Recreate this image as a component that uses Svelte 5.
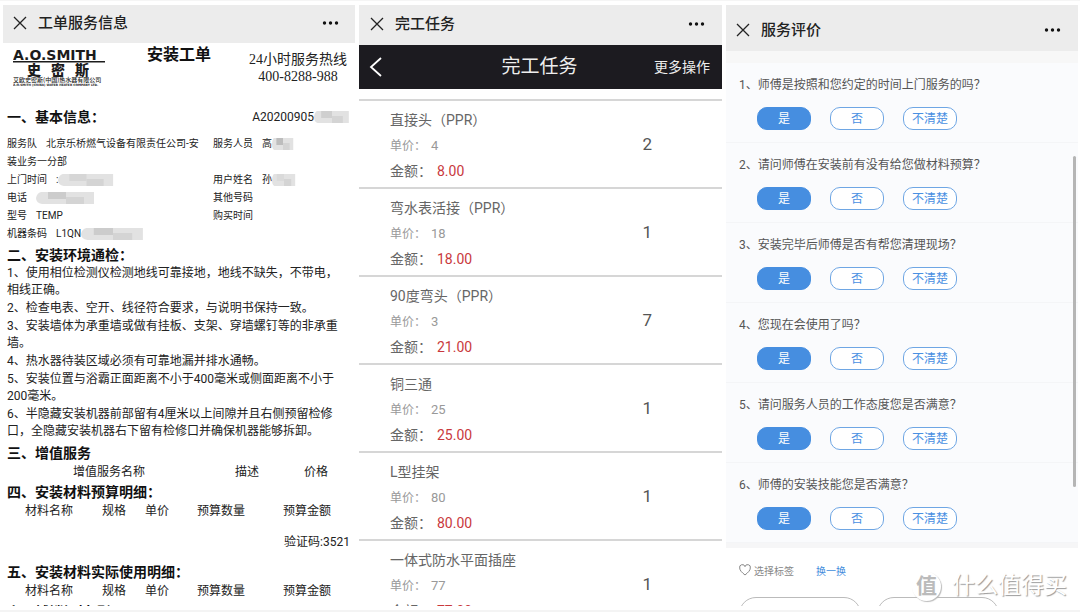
<script>
  const checks = [
    ['1、使用相位检测仪检测地线可靠接地，地线不缺失，不带电，', '相线正确。'],
    ['2、检查电表、空开、线径符合要求，与说明书保持一致。'],
    ['3、安装墙体为承重墙或做有挂板、支架、穿墙螺钉等的非承重', '墙。'],
    ['4、热水器待装区域必须有可靠地漏并排水通畅。'],
    ['5、安装位置与浴霸正面距离不小于400毫米或侧面距离不小于', '200毫米。'],
    ['6、半隐藏安装机器前部留有4厘米以上间隙并且右侧预留检修', '口，全隐藏安装机器右下留有检修口并确保机器能够拆卸。']
  ];
  const items = [
    { name: '直接头（PPR）', price: '4', total: '8.00', count: 2 },
    { name: '弯水表活接（PPR）', price: '18', total: '18.00', count: 1 },
    { name: '90度弯头（PPR）', price: '3', total: '21.00', count: 7 },
    { name: '铜三通', price: '25', total: '25.00', count: 1 },
    { name: 'L型挂架', price: '80', total: '80.00', count: 1 },
    { name: '一体式防水平面插座', price: '77', total: '77.00', count: 1 }
  ];
  const questions = [
    '师傅是按照和您约定的时间上门服务的吗？',
    '请问师傅在安装前有没有给您做材料预算？',
    '安装完毕后师傅是否有帮您清理现场？',
    '您现在会使用了吗？',
    '请问服务人员的工作态度您是否满意？',
    '师傅的安装技能您是否满意？'
  ];
  const options = ['是', '否', '不清楚'];
  const materialHeads = ['材料名称', '规格', '单价', '预算数量', '预算金额'];
  let answers = $state(questions.map(() => '是'));
</script>

{#snippet bar(title)}
  <header class="bar">
    <button class="icon" aria-label="关闭">
      <svg width="14" height="14" viewBox="0 0 14 14"><path d="M1 1l12 12M13 1L1 13" stroke="#222" stroke-width="1.3" fill="none" /></svg>
    </button>
    <h1>{title}</h1>
    <button class="icon" aria-label="更多">
      <svg width="18" height="6" viewBox="0 0 18 6"><circle cx="2.500" cy="3" r="1.7" fill="#111" /><circle cx="8.500" cy="3" r="1.7" fill="#111" /><circle cx="14.500" cy="3" r="1.7" fill="#111" /></svg>
    </button>
  </header>
{/snippet}

{#snippet mask(w, tone)}
  <svg class="mask" width={w} height="14" viewBox="0 0 60 14" preserveAspectRatio="none">
    <path d="M5 1H58V13H6Q0 12 0 7Q1 2 5 1Z" fill="#e2e2e2" />
    <path d="M12 1H30V8H12Z" fill={tone} />
    <path d="M30 6H48V13H30Z" fill="#d4d4d4" />
  </svg>
{/snippet}

{#snippet materials()}
  <table class="materials">
    <thead><tr>{#each materialHeads as h}<th>{h}</th>{/each}</tr></thead>
  </table>
{/snippet}

<main>
  <section class="panel order">
    {@render bar('工单服务信息')}
    <div class="sheet">
      <div class="top">
        <div class="logo">
          <svg width="96" height="38" viewBox="0 0 96 38" role="img" aria-label="A.O.SMITH 史密斯">
            <g fill="#1c1c1c" font-family="'DejaVu Sans', sans-serif" font-weight="700">
              <text x="0" y="11" font-size="14">A.O.SMITH</text>
              <rect x="0" y="12" width="92" height="1.5" />
              <g font-family="'Noto Sans CJK SC', sans-serif" font-weight="900">
                <text x="14" y="26" font-size="14">史</text>
                <text x="38" y="26" font-size="14">密</text>
                <text x="62" y="26" font-size="14">斯</text>
                <text x="0" y="33" font-size="6" font-weight="500">艾欧史密斯(中国)热水器有限公司</text>
              </g>
              <text x="0" y="37" font-size="3">A.O.SMITH (CHINA) WATER HEATER COMPANY LTD.</text>
            </g>
          </svg>
        </div>
        <h2>安装工单</h2>
        <p class="hotline">24小时服务热线<br />400-8288-988</p>
      </div>

      <div class="basic">
        <h3>一、基本信息：</h3>
        <span class="code">A20200905{@render mask(36, '#cfcfcf')}</span>
      </div>
      <dl class="info">
        <div><dt>服务队</dt><dd>北京乐桥燃气设备有限责任公司-安装业务一分部</dd></div>
        <div><dt>服务人员</dt><dd>高{@render mask(22, '#bdbdbd')}</dd></div>
        <div><dt>上门时间</dt><dd>:{@render mask(57, '#d6d6d6')}</dd></div>
        <div><dt>用户姓名</dt><dd>孙{@render mask(24, '#dadada')}</dd></div>
        <div><dt>电话</dt><dd>{@render mask(60, '#cccccc')}</dd></div>
        <div><dt>其他号码</dt><dd></dd></div>
        <div><dt>型号</dt><dd>TEMP</dd></div>
        <div><dt>购买时间</dt><dd></dd></div>
        <div><dt>机器条码</dt><dd>L1QN{@render mask(64, '#cccccc')}</dd></div>
      </dl>

      <h3>二、安装环境通检：</h3>
      <div class="checks">
        {#each checks as lines}
          <p>{#each lines as line}<span>{line}</span>{/each}</p>
        {/each}
      </div>

      <h3>三、增值服务</h3>
      <table class="extras">
        <thead><tr><th>增值服务名称</th><th>描述</th><th>价格</th></tr></thead>
      </table>
      <h3>四、安装材料预算明细：</h3>
      {@render materials()}
      <p class="verify">验证码:3521</p>
      <h3>五、安装材料实际使用明细：</h3>
      {@render materials()}
      <h3>六、辅销加材明细：</h3>
    </div>
  </section>

  <section class="panel task">
    {@render bar('完工任务')}
    <nav>
      <button class="icon" aria-label="返回">
        <svg width="14" height="20" viewBox="0 0 14 20"><path d="M12 1L2 10l10 9" stroke="#fff" stroke-width="1.8" fill="none" /></svg>
      </button>
      <h2>完工任务</h2>
      <button class="more">更多操作</button>
    </nav>
    <ul>
      {#each items as item}
        <li>
          <div class="detail">
            <p class="name">{item.name}</p>
            <p class="price">单价：<span>{item.price}</span></p>
            <p class="total">金额：<span>{item.total}</span></p>
          </div>
          <span class="count">{item.count}</span>
        </li>
      {/each}
    </ul>
  </section>

  <section class="panel review">
    {@render bar('服务评价')}
    <div class="questions">
      {#each questions as question, i}
        <div class="question">
          <p>{i + 1}、{question}</p>
          <div class="options">
            {#each options as option}
              <button class:chosen={answers[i] === option} aria-pressed={answers[i] === option} onclick={() => (answers[i] = option)}>{option}</button>
            {/each}
          </div>
        </div>
      {/each}
    </div>
    <div class="tags">
      <div class="tagline">
        <svg width="12" height="12" viewBox="0 0 12 12"><path d="M6 11C3 8.500.7 6.500.7 4A2.700 2.700 0 0 1 6 2.700 2.700 2.700 0 0 1 11.300 4C11.300 6.500 9 8.500 6 11Z" fill="none" stroke="#888" /></svg>
        <span>选择标签</span>
        <button>换一换</button>
      </div>
      <div class="chips"><span></span><span></span></div>
    </div>
    <i class="thumb"></i>
    <div class="watermark"><b>值</b><span>什么值得买</span></div>
  </section>
</main>

<style>
  :global(body) { margin: 0; background: #fff; }
  main {
    box-sizing: border-box;
    height: 100vh;
    display: grid;
    grid-template-columns: 352fr 363fr 352fr;
    grid-template-rows: minmax(0, 1fr);
    gap: 4px;
    padding: 4px 2px 4px 3px;
    border-top: 1px solid #f5f5f5;
    border-bottom: 2px solid #f4f4f4;
    font-family: Roboto, 'Noto Sans CJK SC', sans-serif;
    color: #222;
  }
  h1, h2, h3, p, ul, dl, dd { margin: 0; padding: 0; }
  button { border: 0; padding: 0; background: none; font: inherit; color: inherit; cursor: pointer; }
  table { border-collapse: collapse; table-layout: fixed; width: 100%; }
  th { padding: 2px 0 0; font-weight: 400; line-height: 17px; text-align: left; white-space: nowrap; }

  .panel { position: relative; overflow: hidden; min-width: 0; background: #fff; }
  .icon { display: flex; align-items: center; }
  .bar { display: flex; align-items: center; height: 38px; box-sizing: border-box; padding: 0 15px 2px 10px; background: #ececec; }
  .bar h1 { flex: 1; margin-left: 11px; font-size: 15px; line-height: 20px; font-weight: 500; }

  .sheet { padding: 0 5px 0 4px; white-space: nowrap; font-size: 12px; line-height: 18px; }
  .top { display: flex; justify-content: space-between; height: 64px; }
  .logo { padding: 6px 0 0 6px; }
  .top h2 { font-size: 16px; line-height: 24px; font-weight: 700; color: #111; }
  .hotline { padding: 8px 3px 0 0; font-family: 'Liberation Serif', 'Noto Sans CJK SC', serif; font-size: 14px; line-height: 17px; text-align: center; }
  h3 { font-size: 14px; line-height: 18px; font-weight: 700; color: #111; }
  .basic { display: flex; justify-content: space-between; align-items: center; height: 20px; margin-bottom: 8px; }
  .code { display: flex; align-items: center; }
  .mask { flex: none; display: inline-block; vertical-align: middle; }
  .info { display: grid; grid-template-columns: 196px 1fr; column-gap: 10px; font-size: 10px; line-height: 18px; margin-bottom: 3px; }
  .info dt, .info dd { display: inline; }
  .info dt { margin-right: 9px; }
  .info div { white-space: normal; min-height: 18px; }
  .info div:nth-child(n + 2) { height: 18px; white-space: nowrap; }
  .checks { display: grid; gap: 1px; line-height: 17px; padding: 1px 0 4px; }
  .checks span { display: block; }
  .extras { margin-bottom: 2px; }
  .extras th:nth-child(1) { width: 228px; padding-left: 66px; box-sizing: border-box; }
  .extras th:nth-child(2) { width: 69px; }
  .materials th:nth-child(1) { width: 95px; padding-left: 18px; box-sizing: border-box; }
  .materials th:nth-child(2) { width: 43px; }
  .materials th:nth-child(3) { width: 52px; }
  .materials th:nth-child(4) { width: 86px; }
  .verify { text-align: right; padding: 13px 0 12px; }
  .materials + h3 { margin-top: 3px; }

  .task .bar { height: 40px; padding-left: 11px; padding-right: 16px; }
  .task nav { display: grid; grid-template-columns: 1fr auto 1fr; align-items: center; height: 44px; padding: 0 12px 0 10px; background: #1c1b20; color: #eee; }
  .task nav h2 { font-size: 19px; line-height: 26px; font-weight: 400; }
  .more { justify-self: end; font-size: 14px; line-height: 20px; }
  ul { list-style: none; padding-top: 10px; }
  li { display: flex; box-sizing: border-box; height: 88px; padding: 6px 70px 0 31px; border-top: 2px solid #d6d6d6; }
  .detail { flex: 1; color: #666; line-height: 26px; }
  .detail p { white-space: nowrap; }
  .name, .total { font-size: 14px; }
  .price { font-size: 12px; color: #999; }
  .price span { font-size: 13px; margin-left: 5px; }
  .total span { color: #c9393d; margin-left: 5px; }
  .total { line-height: 24px; }
  .count { font-size: 17px; line-height: 24px; padding-top: 25px; color: #555; }

  .review .bar { height: 46px; padding-top: 6px; padding-right: 16px; }
  .questions { border-top: 12px solid #f7f7f7; border-bottom: 5px solid #f6f6f7; background: #fafbfd; }
  .question { box-sizing: border-box; height: 80px; padding: 13px 13px 0; border-bottom: 1px solid #f4f5f7; color: #555; font-size: 12px; line-height: 18px; }
  .options { display: flex; gap: 19px; padding: 13px 0 0 18px; }
  .options button { box-sizing: border-box; width: 54px; height: 23px; padding-top: 1px; border: 1px solid #6ea6e4; border-radius: 10px; background: #fff; color: #4a90e2; font-size: 12px; line-height: 20px; }
  .options .chosen { background: #468ee0; border-color: #468ee0; color: #fff; }
  .tags { padding: 13px 13px 0; }
  .tagline { display: flex; align-items: center; height: 18px; font-size: 10px; color: #888; }
  .tagline span { margin: 0 22px 0 3px; }
  .tagline button { color: #3f8bdc; }
  .chips { display: flex; gap: 16px; padding-top: 18px; }
  .chips span { box-sizing: border-box; width: 122px; height: 34px; border: 1px solid #bbb; border-radius: 17px; }
  .thumb { position: absolute; right: 2px; top: 151px; width: 3px; height: 331px; border-radius: 2px; background: #b5b5b5; }
  .watermark { position: absolute; right: 11px; bottom: 5px; display: flex; align-items: center; gap: 11px; color: #fff; font-size: 23px; line-height: 30px; text-shadow: 1px 1px 1px #999; }
  .watermark b { width: 29px; height: 29px; border-radius: 50%; background: #fff; box-shadow: 1px 1px 1px #bbb; color: #bbb; font-size: 21px; line-height: 28px; text-align: center; text-shadow: none; }
</style>
